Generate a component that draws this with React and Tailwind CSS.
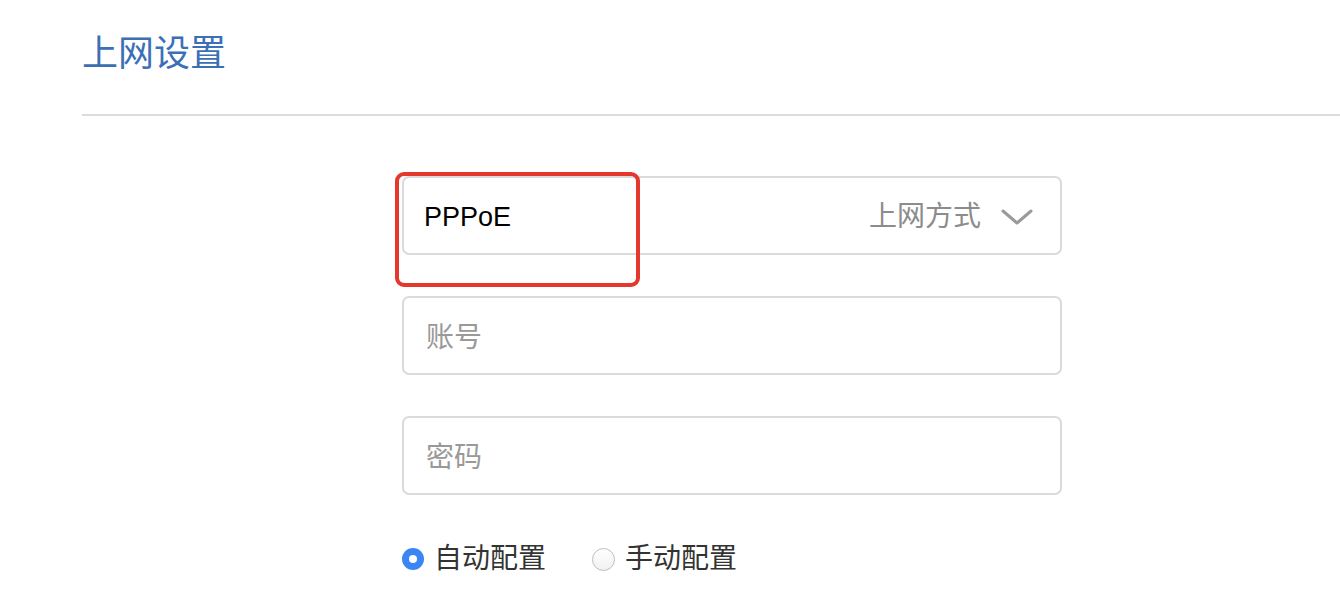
import { useState } from "react";

const font = "font-['Liberation_Sans','Noto_Sans_CJK_SC',sans-serif]";

const Radio = ({ checked, label, onClick }) => (
  <button onClick={onClick} className="flex items-center gap-[10px] h-[28px]">
    {checked ? (
      <span className="w-[22px] h-[22px] rounded-full bg-[#3a86f2] flex items-center justify-center">
        <span className="w-[8px] h-[8px] rounded-full bg-white" />
      </span>
    ) : (
      <span className="w-[23px] h-[23px] rounded-full border border-[#bdbdbd] bg-gradient-to-b from-white to-[#f1f1f1]" />
    )}
    <span className="text-[28px] leading-[28px] text-[#333]">{label}</span>
  </button>
);

export default function App() {
  const [auto, setAuto] = useState(true);

  return (
    <div className={`w-[1340px] h-[604px] bg-white pl-[82px] overflow-hidden ${font}`}>
      <h1 className="pt-[34px] h-[74px] text-[36px] leading-[40px] text-[#3b70b6]">上网设置</h1>
      <div className="mt-[40px] h-[2px] bg-[#dcdcdc]" />

      <div className="ml-[320px] w-[660px] mt-[60px] flex flex-col gap-[41px]">
        <div className="relative">
          <div className="h-[79px] rounded-[7px] border-2 border-[#dadada] flex items-center pt-[3px] pl-[20px] pr-[27px]">
            <span className="text-[27px] text-black">PPPoE</span>
            <span className="ml-auto text-[28px] text-[#8c8c8c]">上网方式</span>
            <svg className="ml-[20px] w-[32px] h-[18px]" viewBox="0 0 32 18" fill="none">
              <path d="M2 3 L16 15 L30 3" stroke="#9a9a9a" strokeWidth="3" strokeLinecap="round" strokeLinejoin="round" />
            </svg>
          </div>
          <div className="absolute left-[-7px] top-[-4px] w-[245px] h-[115px] rounded-[9px] border-[4px] border-[#e4382d] pointer-events-none" />
        </div>

        <div className="h-[79px] rounded-[7px] border-2 border-[#dadada] flex items-center pt-[4px] pl-[22px]">
          <input placeholder="账号" className="w-full outline-none text-[28px] placeholder:text-[#999]" />
        </div>

        <div className="h-[79px] rounded-[7px] border-2 border-[#dadada] flex items-center pt-[4px] pl-[22px]">
          <input type="password" placeholder="密码" className="w-full outline-none text-[28px] placeholder:text-[#999]" />
        </div>
      </div>

      <div className="ml-[320px] mt-[50px] flex items-center gap-[46px]">
        <Radio checked={auto} label="自动配置" onClick={() => setAuto(true)} />
        <Radio checked={!auto} label="手动配置" onClick={() => setAuto(false)} />
      </div>
    </div>
  );
}
